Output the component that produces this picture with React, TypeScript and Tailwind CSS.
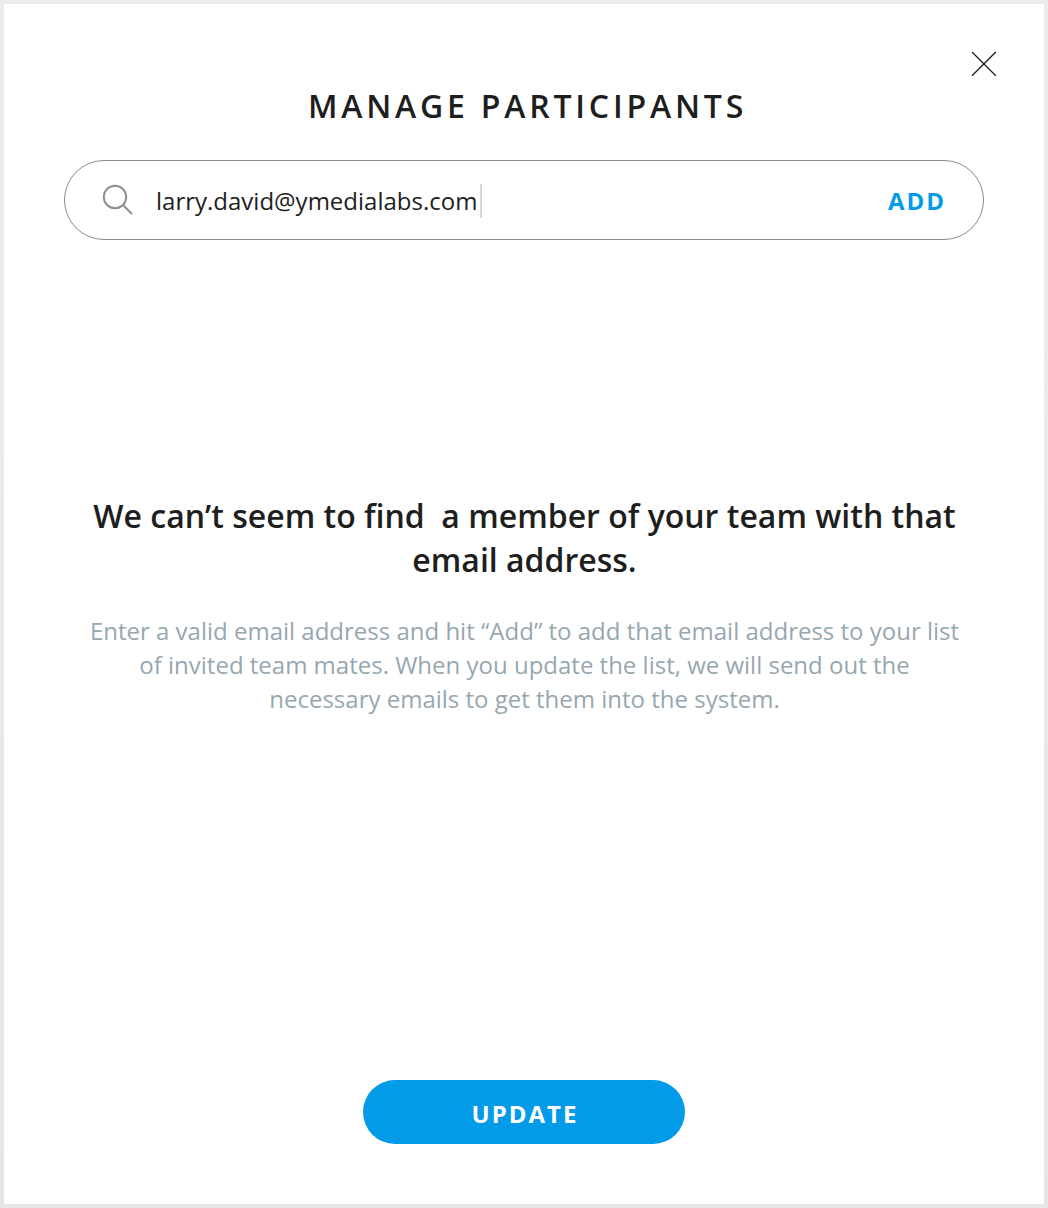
export default function App() {
  return (
    <div className="h-[1208px] w-[1048px] bg-linear-to-b from-[#ececec] to-[#e6e6e6] p-1 font-['Open_Sans',sans-serif] text-[#1e1e1e]">
      <main className="relative flex h-[1200px] w-[1040px] flex-col items-center bg-white">
        <button aria-label="Close" className="absolute top-[47px] left-[967px]">
          <svg width="26" height="26" viewBox="0 0 26 26" fill="none" stroke="#1e1e1e" strokeWidth="1.3">
            <path d="M1 1 24.8 24.8M24.8 1 1 24.8" />
          </svg>
        </button>
        <h1 className="mt-[80px] pl-[7px] text-[32px] leading-[44px] font-semibold tracking-[3.8px]">MANAGE PARTICIPANTS</h1>
        <div className="mt-8 flex h-20 w-[920px] items-center rounded-full border border-[#8b8b8b] pt-[2px] pr-[37px] pl-[37px]">
          <svg className="-mt-[2px]" width="32" height="32" viewBox="0 0 32 32" fill="none" stroke="#8f8f8f" strokeWidth="2">
            <circle cx="13" cy="13" r="11.2" />
            <path d="m21 21 9 9" />
          </svg>
          <span className="ml-[22px] text-[24px] leading-[34px]">larry.david@ymedialabs.com</span>
          <span className="ml-[3px] h-[34px] w-[2px] bg-[#d8d8d8]" />
          <button className="ml-auto text-[24px] leading-[34px] font-bold tracking-[2px] text-[#039be8]">ADD</button>
        </div>
        <h2 className="mt-[254px] pl-[1px] text-center text-[32px] leading-[44px] font-semibold">
          <span className="block whitespace-pre">We can’t seem to find  a member of your team with that</span>
          <span className="block">email address.</span>
        </h2>
        <p className="mt-8 pl-[1px] text-center text-[24px] leading-[34px] text-[#96a7af]">
          <span className="block">Enter a valid email address and hit “Add” to add that email address to your list</span>
          <span className="block">of invited team mates. When you update the list, we will send out the</span>
          <span className="block">necessary emails to get them into the system.</span>
        </p>
        <button className="mt-auto mb-[60px] h-16 w-[322px] rounded-full bg-[#039be8] pt-[3px] pl-[2px] text-[24px] font-bold tracking-[2px] text-white">UPDATE</button>
      </main>
    </div>
  );
}
